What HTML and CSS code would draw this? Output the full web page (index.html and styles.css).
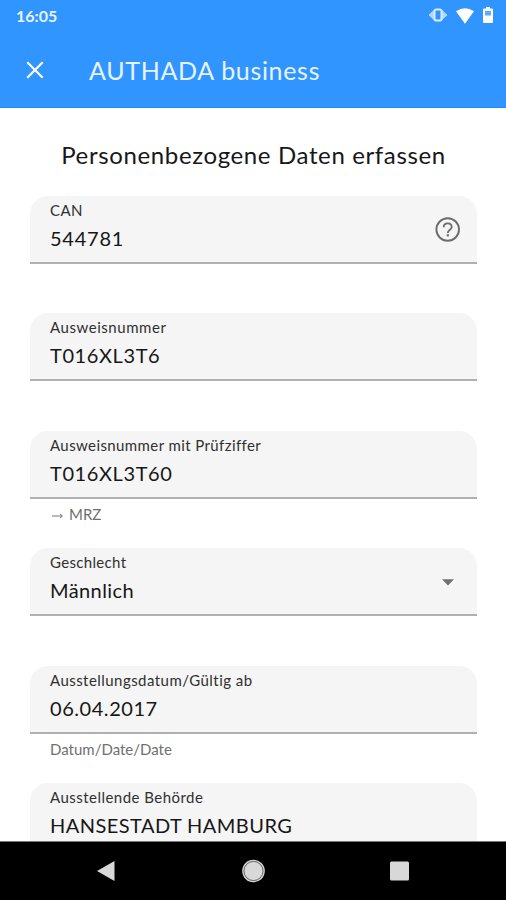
FILE: index.html
```html
<!DOCTYPE html>
<html lang="de">
<head>
<meta charset="utf-8">
<title>AUTHADA business</title>
<link rel="stylesheet" href="styles.css">
</head>
<body>
<div class="screen">
  <header class="top">
    <div class="status">
      <span class="clock">16:05</span>
      <svg class="status-icons" width="66" height="20" viewBox="0 0 66 20">
        <path d="M6 5.500v9L1 10zM14 5.500v9l5-4.500z" fill="#b5d7ff" stroke="#b5d7ff"/>
        <rect x="6.500" y="4.500" width="7" height="11" rx="1.800" fill="#3195ff" stroke="#d9ebff" stroke-width="2"/>
        <path d="M28 5.200Q37 -.8 46 5.200L37 17.800Z" transform="translate(0 1)" fill="#fff"/>
        <path d="M56 3.500h2V2h4v1.500h2q1 0 1 1V17q0 1-1 1h-8q-1 0-1-1V4.500q0-1 1-1z" fill="#fff"/>
        <rect x="57" y="6" width="6" height="4.500" fill="#5aaaff"/>
      </svg>
    </div>
    <div class="bar">
      <svg class="close" width="20" height="20" viewBox="0 0 20 20"><path d="M2.300 2.300l15.400 15.400M17.700 2.300L2.300 17.700" stroke="#fff" stroke-width="2.200"/></svg>
      <span class="app-name">AUTHADA business</span>
    </div>
  </header>
  <main class="content">
    <h1 class="title">Personenbezogene Daten erfassen</h1>
    <section class="field">
      <div class="box">
        <div class="texts"><span class="label l-can">CAN</span><span class="value v-can">544781</span></div>
        <svg class="help" width="26" height="26" viewBox="0 0 26 26"><circle cx="12.700" cy="13.500" r="11.300" fill="none" stroke="#6c6c6c" stroke-width="1.900"/><path d="M8.700 11.200C8.700 8.800 10.400 7.400 12.700 7.400s4 1.500 4 3.600c0 2.700-3.900 2.900-3.900 6" fill="none" stroke="#6c6c6c" stroke-width="1.800"/><rect x="11.700" y="18.200" width="2.200" height="2.200" fill="#6c6c6c"/></svg>
      </div>
    </section>
    <section class="field">
      <div class="box"><div class="texts"><span class="label l-nr">Ausweisnummer</span><span class="value v-nr">T016XL3T6</span></div></div>
    </section>
    <section class="field">
      <div class="box"><div class="texts"><span class="label l-check">Ausweisnummer mit Prüfziffer</span><span class="value v-nr">T016XL3T60</span></div></div>
      <p class="hint"><svg class="arrow" width="12" height="8" viewBox="0 0 12 8"><path d="M0 4h10M8 2l2.500 2L8 6" fill="none" stroke="#777"/></svg><span>MRZ</span></p>
    </section>
    <section class="field">
      <div class="box">
        <div class="texts"><span class="label l-sex">Geschlecht</span><span class="value v-sex">Männlich</span></div>
        <svg class="caret" width="12" height="7" viewBox="0 0 12 7"><path d="M0 .3h12L6 6.500z" fill="#707070"/></svg>
      </div>
    </section>
    <section class="field">
      <div class="box"><div class="texts"><span class="label l-date">Ausstellungsdatum/Gültig ab</span><span class="value v-date">06.04.2017</span></div></div>
      <p class="hint"><span>Datum/Date/Date</span></p>
    </section>
    <section class="field">
      <div class="box"><div class="texts"><span class="label l-org">Ausstellende Behörde</span><span class="value v-org">HANSESTADT HAMBURG</span></div></div>
    </section>
  </main>
  <nav class="nav">
    <svg width="24" height="24" viewBox="0 0 24 24"><path d="M3 12L20.500 2v20z" fill="#d8d8d8"/></svg>
    <svg width="24" height="24" viewBox="0 0 24 24"><circle cx="12.500" cy="12" r="11.300" fill="#d8d8d8"/><circle cx="12.500" cy="12" r="9.600" fill="none" stroke="#444" stroke-width=".8"/></svg>
    <svg width="24" height="24" viewBox="0 0 24 24"><rect x="2" y="2.500" width="19" height="19" rx="1.500" fill="#d8d8d8"/></svg>
  </nav>
</div>
</body>
</html>
```
FILE: styles.css
```css
* { box-sizing: border-box; }
body { margin: 0; background: #fff; font-family: Lato, "Open Sans", sans-serif; color: #171717; }
.screen { width: 506px; height: 900px; overflow: hidden; display: flex; flex-direction: column; }
.top { flex: none; height: 108px; background: #3195ff; border-bottom: 1px solid #2389f5; color: #fff; }
.status { height: 32px; padding: 0 12px 0 16px; display: flex; align-items: center; justify-content: space-between; }
.clock { font-size: 16px; line-height: 32px; font-weight: 700; color: #e8f3ff; }
.status-icons { margin-top: -2px; }
.bar { height: 76px; padding-left: 25px; display: flex; align-items: center; }
.close { flex: none; margin-right: 44px; }
.app-name { margin-top: -1px; font-size: 25px; line-height: 30px; letter-spacing: .68px; color: #e8f3ff; white-space: nowrap; }
.content { flex: 1; min-height: 0; overflow: hidden; padding: 31px 29px 0 30px; }
.title { margin: 0 0 25px; font-size: 24px; line-height: 32px; font-weight: 400; letter-spacing: .63px; text-align: center; white-space: nowrap; }
.field { height: 117.4px; }
.box { height: 68px; background: #f5f5f5; border-radius: 18px 18px 0 0; border-bottom: 2px solid #b0b0b0; padding: 0 16px 0 20px; display: flex; justify-content: space-between; align-items: center; }
.texts { align-self: flex-start; padding-top: 4px; display: flex; flex-direction: column; align-items: flex-start; white-space: nowrap; }
.label { font-size: 15px; line-height: 20px; color: #303030; }
.value { margin-top: 4px; font-size: 20px; line-height: 28px; }
.l-can { letter-spacing: .4px; }
.v-can { letter-spacing: .75px; }
.l-nr { letter-spacing: .55px; }
.v-nr { letter-spacing: .6px; }
.l-check { letter-spacing: .4px; }
.l-sex { letter-spacing: .33px; }
.v-sex { letter-spacing: .4px; }
.l-date { letter-spacing: .45px; }
.v-date { letter-spacing: .55px; }
.l-org { letter-spacing: .47px; }
.v-org { letter-spacing: .45px; }
.caret { margin: 2px 7px 0 0; }
.hint { margin: 0; padding: 5px 0 0 20px; font-size: 15px; line-height: 20px; color: #707070; display: flex; align-items: center; }
.arrow { margin: 4px 5px 0 2px; }
.nav { flex: none; height: 59px; background: #000; border-top: 1px solid #777; padding: 0 94px 0 94px; display: flex; align-items: center; justify-content: space-between; }
```
